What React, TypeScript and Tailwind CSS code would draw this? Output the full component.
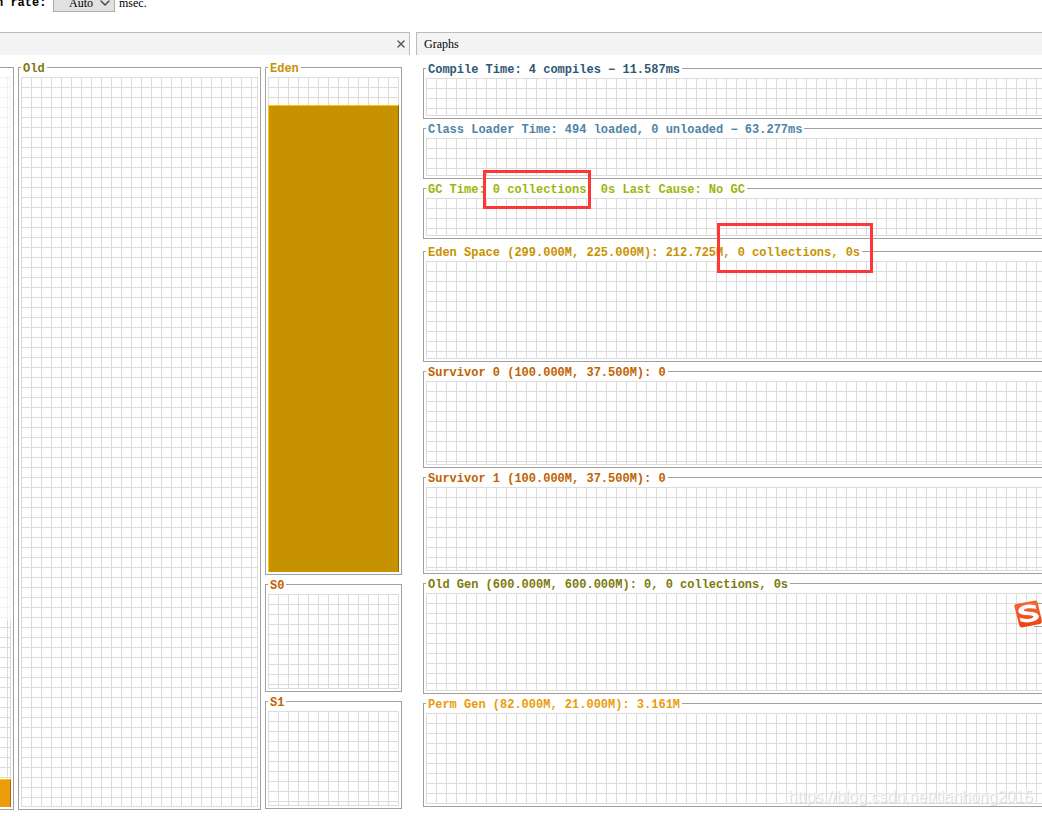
import type { ReactNode } from "react";
import { ChevronDown, X } from "lucide-react";
import clsx from "clsx";

interface PanelProps {
  title: string;
  color: string;
  size: string;
  className?: string;
  children?: ReactNode;
}

const GRID =
  "flex flex-col border-r border-b border-[#dcdcdc] bg-[linear-gradient(#dcdcdc_1px,transparent_1px),linear-gradient(to_right,#dcdcdc_1px,transparent_1px)] bg-[size:10px_10px]";

const GRAPHS: PanelProps[] = [
  { title: "Compile Time: 4 compiles − 11.587ms", color: "text-[#2f5875]", size: "h-[38px]" },
  { title: "Class Loader Time: 494 loaded, 0 unloaded − 63.277ms", color: "text-[#4f84a6]", size: "h-[38px]" },
  { title: "GC Time: 0 collections, 0s Last Cause: No GC", color: "text-[#9cb60c]", size: "h-[38px]" },
  {
    title: "Eden Space (299.000M, 225.000M): 212.725M, 0 collections, 0s",
    color: "text-[#c79200]",
    size: "h-[98px]",
    className: "mt-[3px]",
  },
  { title: "Survivor 0 (100.000M, 37.500M): 0", color: "text-[#c16200]", size: "h-[84px]" },
  { title: "Survivor 1 (100.000M, 37.500M): 0", color: "text-[#c16200]", size: "h-[84px]" },
  { title: "Old Gen (600.000M, 600.000M): 0, 0 collections, 0s", color: "text-[#7c7a0a]", size: "h-[98px]" },
  { title: "Perm Gen (82.000M, 21.000M): 3.161M", color: "text-[#eb9c0a]", size: "h-[91px]" },
];

function Panel({ title, color, size, className, children }: PanelProps) {
  return (
    <fieldset className={clsx("min-w-0 border border-[#a0a0a0] px-[2px] pt-[3px] pb-[2px]", className)}>
      <legend className={clsx("px-[2px] pt-[3px] text-[12px] leading-[10px] font-bold whitespace-nowrap", color)}>
        {title}
      </legend>
      <div className={clsx(GRID, size)}>{children}</div>
    </fieldset>
  );
}

function Toolbar() {
  return (
    <div className="flex h-8 items-start overflow-hidden">
      <label htmlFor="rate" className="-mt-[4px] -ml-1 w-[57px] text-[12px] leading-[14px] font-bold whitespace-nowrap">
        h rate:
      </label>
      <div className="relative -mt-[6px]">
        <select
          id="rate"
          className="block h-[18px] w-[62px] appearance-none border border-[#adadad] bg-[#e1e1e1] pl-[15px] font-['Liberation_Serif',serif] text-[12px] leading-[14px]"
        >
          <option>Auto</option>
        </select>
        <ChevronDown className="pointer-events-none absolute top-[1px] right-[2px] size-4 text-[#444]" strokeWidth={2} />
      </div>
      <span className="-mt-[4px] ml-1 font-['Liberation_Serif',serif] text-[12px] leading-[14px]">msec.</span>
    </div>
  );
}

function Spaces() {
  return (
    <section className="w-[410px] shrink-0">
      <div className="flex h-[23px] items-center justify-end border-t border-r border-[#bcbcbc] bg-[#f4f4f4] pr-[2px]">
        <button type="button" aria-label="Close">
          <X className="size-3 text-[#5a5a5a]" strokeWidth={3} />
        </button>
      </div>
      <div className="flex items-start gap-1 pt-[6px]">
        {/* Perm, mostly scrolled out on the left */}
        <div className="mt-[6px] w-[14px] border-y border-r border-[#a0a0a0] pt-[9px] pr-[2px] pb-[2px]">
          <div className={clsx(GRID, "h-[730px] justify-between bg-[position:7px_0]")}>
            <div className="-mr-px h-[543px] bg-white/60" />
            <div className="-mr-px -mb-px h-[28px] border-t border-r border-t-[#ffc800] border-r-[#a56d06] bg-[#eb9c0a]" />
          </div>
        </div>
        <Panel title="Old" color="text-[#7c7a0a]" size="h-[730px]" className="w-[243px]" />
        <div className="flex w-[137px] flex-col gap-[3px]">
          <Panel title="Eden" color="text-[#c79200]" size="h-[495px] justify-end">
            <div className="-mr-px -mb-px h-[467px] border-t border-r border-l border-t-[#ffc800] border-r-[#8b6600] border-l-[#ffc800] bg-[#c79200]" />
          </Panel>
          <Panel title="S0" color="text-[#c16200]" size="h-[95px]" />
          <Panel title="S1" color="text-[#c16200]" size="h-[95px]" />
        </div>
      </div>
    </section>
  );
}

function SogouBadge() {
  return (
    <div className="absolute top-[570px] right-0 flex w-7 justify-end">
      <div className="mt-[1px] h-6 w-2 border-y border-[#a0a0a0] bg-white" />
      <svg viewBox="0 0 28 28" className="absolute -top-[2px] left-0 size-7" aria-hidden="true">
        <defs>
          <linearGradient id="badge" x1="0" y1="0" x2="0" y2="1">
            <stop offset="0" stopColor="#f5683a" />
            <stop offset="1" stopColor="#ee4410" />
          </linearGradient>
        </defs>
        <path
          d="M2 4 L21 0.6 Q23 0.4 23.5 2 L28 21 Q28 23.5 26 24 L8 27.4 Q6 27.4 5.3 25.5 L0.4 6.5 Q0 4.4 2 4Z"
          fill="url(#badge)"
        />
        <path
          d="M21.5 5.2 L22.3 9 C17 7.6 11 8 10 10 C9.4 11.6 14 11.4 18 12 C23 12.6 25.6 14.6 24.6 17.6 C23.2 21.6 14 23.6 6.6 21.6 L5.6 17.8 C11 19.6 18.4 19.2 19.4 17 C20 15.4 15.4 15.6 11.4 15 C6 14.4 3.4 12.4 4.6 9.4 C6.4 5.2 15 3.6 21.5 5.2Z"
          fill="#fff"
        />
      </svg>
    </div>
  );
}

function Graphs() {
  return (
    <section className="relative min-w-0 flex-1 overflow-hidden">
      <h2 className="flex h-[23px] items-center border-t border-l border-[#bcbcbc] bg-[#f4f4f4] pl-[7px] font-['Liberation_Serif',serif] text-[12px]">
        Graphs
      </h2>
      <div className="-mr-1 flex flex-col gap-[3px] pt-[7px] pl-[7px]">
        {GRAPHS.map((graph) => (
          <Panel key={graph.title} {...graph} />
        ))}
      </div>

      {/* Highlights over the collection counters */}
      <div className="absolute top-[138px] left-[67px] h-[39px] w-[108px] border-3 border-[#fb3737]" />
      <div className="absolute top-[191px] left-[301px] h-[50px] w-[156px] border-3 border-[#fb3737]" />

      <SogouBadge />
      <p className="absolute top-[756px] right-[9px] font-['Liberation_Sans',sans-serif] text-[16px] leading-[18px] text-white/70 [text-shadow:1px_1px_1px_#d4d4d4]">
        https://blog.csdn.net/tianhong2015
      </p>
    </section>
  );
}

export default function App() {
  return (
    <main className="min-h-screen overflow-hidden bg-white font-['Liberation_Mono',monospace] text-black">
      <Toolbar />
      <div className="flex gap-[6px]">
        <Spaces />
        <Graphs />
      </div>
    </main>
  );
}
